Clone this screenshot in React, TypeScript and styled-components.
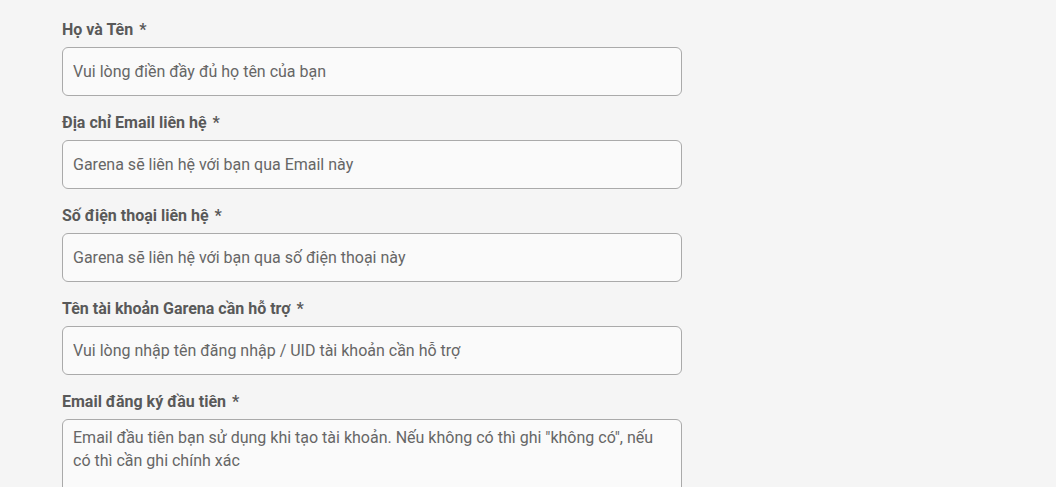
import React from "react";
import styled, { createGlobalStyle } from "styled-components";

const GlobalStyle = createGlobalStyle`
  html, body {
    margin: 0;
    padding: 0;
    background: #f5f5f5;
    font-family: Roboto, "Liberation Sans", Arial, sans-serif;
  }
  * { box-sizing: border-box; }
`;

const Form = styled.form`
  display: flex;
  flex-direction: column;
  gap: 18px;
  width: 620px;
  margin-left: 62px;
  padding-top: 21px;
`;

const Field = styled.div`
  display: flex;
  flex-direction: column;
  gap: 8px;
`;

const Label = styled.label`
  font-size: 16px;
  line-height: 18px;
  font-weight: 700;
  color: #595959;
  span {
    margin-left: 6px;
  }
`;

const Input = styled.input`
  height: 49px;
  width: 100%;
  padding: 0 10px;
  font-family: inherit;
  font-size: 16px;
  color: #333;
  background: #fafafa;
  border: 1px solid #aaa;
  border-radius: 6px;
  outline: none;
  &::placeholder {
    color: #666;
  }
`;

const TextArea = styled.textarea`
  height: 110px;
  width: 100%;
  padding: 6px 10px;
  font-family: inherit;
  font-size: 16px;
  line-height: 23px;
  color: #333;
  background: #fafafa;
  border: 1px solid #aaa;
  border-radius: 6px;
  outline: none;
  resize: none;
  &::placeholder {
    color: #666;
  }
`;

const fields = [
  { label: "Họ và Tên", placeholder: "Vui lòng điền đầy đủ họ tên của bạn" },
  { label: "Địa chỉ Email liên hệ", placeholder: "Garena sẽ liên hệ với bạn qua Email này" },
  { label: "Số điện thoại liên hệ", placeholder: "Garena sẽ liên hệ với bạn qua số điện thoại này" },
  { label: "Tên tài khoản Garena cần hỗ trợ", placeholder: "Vui lòng nhập tên đăng nhập / UID tài khoản cần hỗ trợ" },
];

const App = () => {
  return (
    <>
      <GlobalStyle />
      <Form>
        {fields.map((f) => (
          <Field key={f.label}>
            <Label>
              {f.label}
              <span>*</span>
            </Label>
            <Input placeholder={f.placeholder} />
          </Field>
        ))}
        <Field>
          <Label>
            Email đăng ký đầu tiên
            <span>*</span>
          </Label>
          <TextArea placeholder={'Email đầu tiên bạn sử dụng khi tạo tài khoản. Nếu không có thì ghi "không có", nếu có thì cần ghi chính xác'} />
        </Field>
      </Form>
    </>
  );
};

export default App;
